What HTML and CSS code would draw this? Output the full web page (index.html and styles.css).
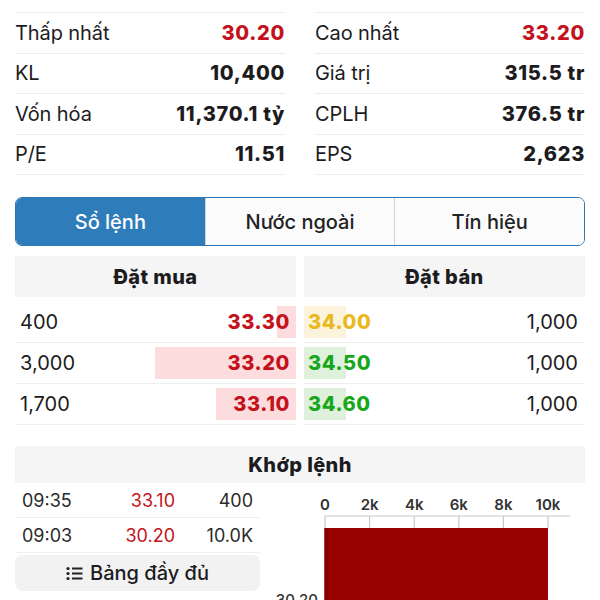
FILE: index.html
```html
<!doctype html>
<html lang="vi">
<head>
    <meta charset="UTF-8">
    <title>Cổ phiếu</title>
    <link rel="stylesheet" href="styles.css">
</head>
<body>
<div class="page">
    <div class="stats">
        <ul class="col">
            <li><span>Thấp nhất</span><b class="red">30.20</b></li>
            <li><span>KL</span><b>10,400</b></li>
            <li><span>Vốn hóa</span><b>11,370.1 tỷ</b></li>
            <li><span>P/E</span><b>11.51</b></li>
        </ul>
        <ul class="col">
            <li><span>Cao nhất</span><b class="red">33.20</b></li>
            <li><span>Giá trị</span><b>315.5 tr</b></li>
            <li><span>CPLH</span><b>376.5 tr</b></li>
            <li><span>EPS</span><b>2,623</b></li>
        </ul>
    </div>

    <div class="tabs">
        <div class="tab current">Sổ lệnh</div>
        <div class="tab">Nước ngoài</div>
        <div class="tab">Tín hiệu</div>
    </div>

    <div class="book">
        <div class="side buy">
            <div class="head">Đặt mua</div>
            <div class="row"><span class="qty">400</span><span class="bar" style="width:6.8%"></span><b class="price red">33.30</b></div>
            <div class="row"><span class="qty">3,000</span><span class="bar" style="width:50.2%"></span><b class="price red">33.20</b></div>
            <div class="row"><span class="qty">1,700</span><span class="bar" style="width:28.5%"></span><b class="price red">33.10</b></div>
        </div>
        <div class="side sell">
            <div class="head">Đặt bán</div>
            <div class="row"><span class="bar ref" style="width:15%"></span><b class="price yellow">34.00</b><span class="qty">1,000</span></div>
            <div class="row"><span class="bar" style="width:15%"></span><b class="price green">34.50</b><span class="qty">1,000</span></div>
            <div class="row"><span class="bar" style="width:15%"></span><b class="price green">34.60</b><span class="qty">1,000</span></div>
        </div>
    </div>

    <div class="match">
        <div class="head">Khớp lệnh</div>
        <div class="match-body">
            <div class="trades">
                <div class="trade"><span>09:35</span><span class="red">33.10</span><span>400</span></div>
                <div class="trade"><span>09:03</span><span class="red">30.20</span><span>10.0K</span></div>
                <div class="full">
                    <svg width="17" height="15" viewBox="0 0 17 15">
                        <circle cx="2" cy="2.5" r="1.6" fill="#222"/>
                        <circle cx="2" cy="7.5" r="1.6" fill="#222"/>
                        <circle cx="2" cy="12.5" r="1.6" fill="#222"/>
                        <rect x="6" y="1.5" width="10.5" height="2" fill="#222"/>
                        <rect x="6" y="6.5" width="10.5" height="2" fill="#222"/>
                        <rect x="6" y="11.5" width="10.5" height="2" fill="#222"/>
                    </svg>
                    Bảng đầy đủ
                </div>
            </div>
            <svg class="chart" width="325" height="117" viewBox="0 0 325 117">
                <g class="axis-text">
                    <text x="65" y="27">0</text>
                    <text x="109.6" y="27">2k</text>
                    <text x="154.2" y="27">4k</text>
                    <text x="198.8" y="27">6k</text>
                    <text x="243.4" y="27">8k</text>
                    <text x="288" y="27">10k</text>
                </g>
                <g stroke="#c8c8c8" stroke-width="1.2">
                    <line x1="65" y1="33" x2="310" y2="33"/>
                    <line x1="65" y1="33" x2="65" y2="45"/>
                    <line x1="109.6" y1="33" x2="109.6" y2="45"/>
                    <line x1="154.2" y1="33" x2="154.2" y2="45"/>
                    <line x1="198.8" y1="33" x2="198.8" y2="45"/>
                    <line x1="243.4" y1="33" x2="243.4" y2="45"/>
                    <line x1="288" y1="33" x2="288" y2="45"/>
                </g>
                <rect x="64.5" y="45" width="223.5" height="80" fill="#990000"/>
                <rect x="64.5" y="45" width="4" height="80" fill="#8a0000"/>
                <text class="ylabel" x="58" y="122">30.20</text>
            </svg>
        </div>
    </div>
</div>
</body>
</html>
```

FILE: styles.css
```css
* {
    padding: 0;
    margin: 0;
    list-style: none;
    box-sizing: border-box;
}

body {
    font-family: Inter, "Noto Sans", sans-serif;
    color: #1c1c1e;
    background: #fff;
}

.page {
    width: 600px;
    height: 600px;
    overflow: hidden;
    padding: 12px 15px 0;
}

.red {
    color: #c4121c;
}

.yellow {
    color: #e8b81c;
}

.green {
    color: #18a61b;
}

/* thong tin chung */
.stats {
    display: flex;
    gap: 30px;
}

.stats .col {
    flex: 1;
    border-top: 1px solid #ececec;
}

.stats li {
    height: 40.5px;
    border-bottom: 1px solid #ececec;
    display: flex;
    align-items: center;
    justify-content: space-between;
    font-size: 20px;
    letter-spacing: -0.1px;
}

.stats b {
    font-weight: 800;
    letter-spacing: 0.7px;
}

/* tabs */
.tabs {
    margin-top: 22px;
    height: 49px;
    display: flex;
    border: 1.5px solid #2d78b5;
    border-radius: 7px;
    overflow: hidden;
}

.tab {
    flex: 1;
    display: flex;
    align-items: center;
    justify-content: center;
    font-size: 20px;
    font-weight: 500;
    color: #222;
    background: #fbfbfc;
    border-left: 1.5px solid #cfd3d8;
}

.tab:first-child {
    border-left: 0;
}

.tab.current {
    background: #2f7cbb;
    color: #fff;
}

/* so lenh */
.book {
    margin-top: 10px;
    display: flex;
    gap: 8px;
}

.side {
    flex: 1;
}

.head {
    height: 41px;
    background: #f5f5f6;
    display: flex;
    align-items: center;
    justify-content: center;
    font-size: 20px;
    font-weight: 800;
    letter-spacing: 0.4px;
    margin-bottom: 5px;
}

.row {
    height: 41px;
    padding: 4px 0;
    border-bottom: 1px solid #efefef;
    display: flex;
    align-items: stretch;
    font-size: 20px;
}

.row .qty {
    flex: 1;
    display: flex;
    align-items: center;
}

.row .price {
    display: flex;
    align-items: center;
    font-weight: 800;
    letter-spacing: 0.6px;
}

.buy .row {
    position: relative;
    padding-left: 5px;
}

.buy .row .bar {
    position: absolute;
    right: 0;
    top: 4px;
    bottom: 4px;
    background: #fcdcdd;
}

.buy .row .price {
    position: relative;
    padding-right: 6px;
}

.sell .row {
    position: relative;
    padding-right: 7px;
}

.sell .row .bar {
    position: absolute;
    left: 0;
    top: 4px;
    bottom: 4px;
    background: #dff0dc;
}

.sell .row .bar.ref {
    background: #fbf3dc;
}

.sell .row .price {
    position: relative;
    padding-left: 4px;
}

.sell .row .qty {
    justify-content: flex-end;
}

/* khop lenh */
.match {
    margin-top: 21px;
}

.match .head {
    height: 37px;
    margin-bottom: 0;
}

.match-body {
    display: flex;
}

.trades {
    width: 245px;
    flex: none;
}

.trade {
    height: 35px;
    border-bottom: 1px solid #efefef;
    display: grid;
    grid-template-columns: 60px 93px 1fr;
    align-items: center;
    padding: 0 7px;
    font-size: 18px;
    color: #2a2a2a;
}

.trade span:nth-child(2),
.trade span:nth-child(3) {
    text-align: right;
}

.trade .red {
    color: #c4121c;
}

.full {
    margin-top: 2px;
    height: 36px;
    background: #f2f2f3;
    border-radius: 8px;
    display: flex;
    align-items: center;
    justify-content: center;
    gap: 7px;
    font-size: 20px;
    font-weight: 500;
}

.chart {
    flex: none;
}

.axis-text text {
    font-size: 15px;
    font-weight: 600;
    fill: #333;
    text-anchor: middle;
}

.ylabel {
    font-size: 15px;
    font-weight: 500;
    fill: #333;
    text-anchor: end;
}
```
